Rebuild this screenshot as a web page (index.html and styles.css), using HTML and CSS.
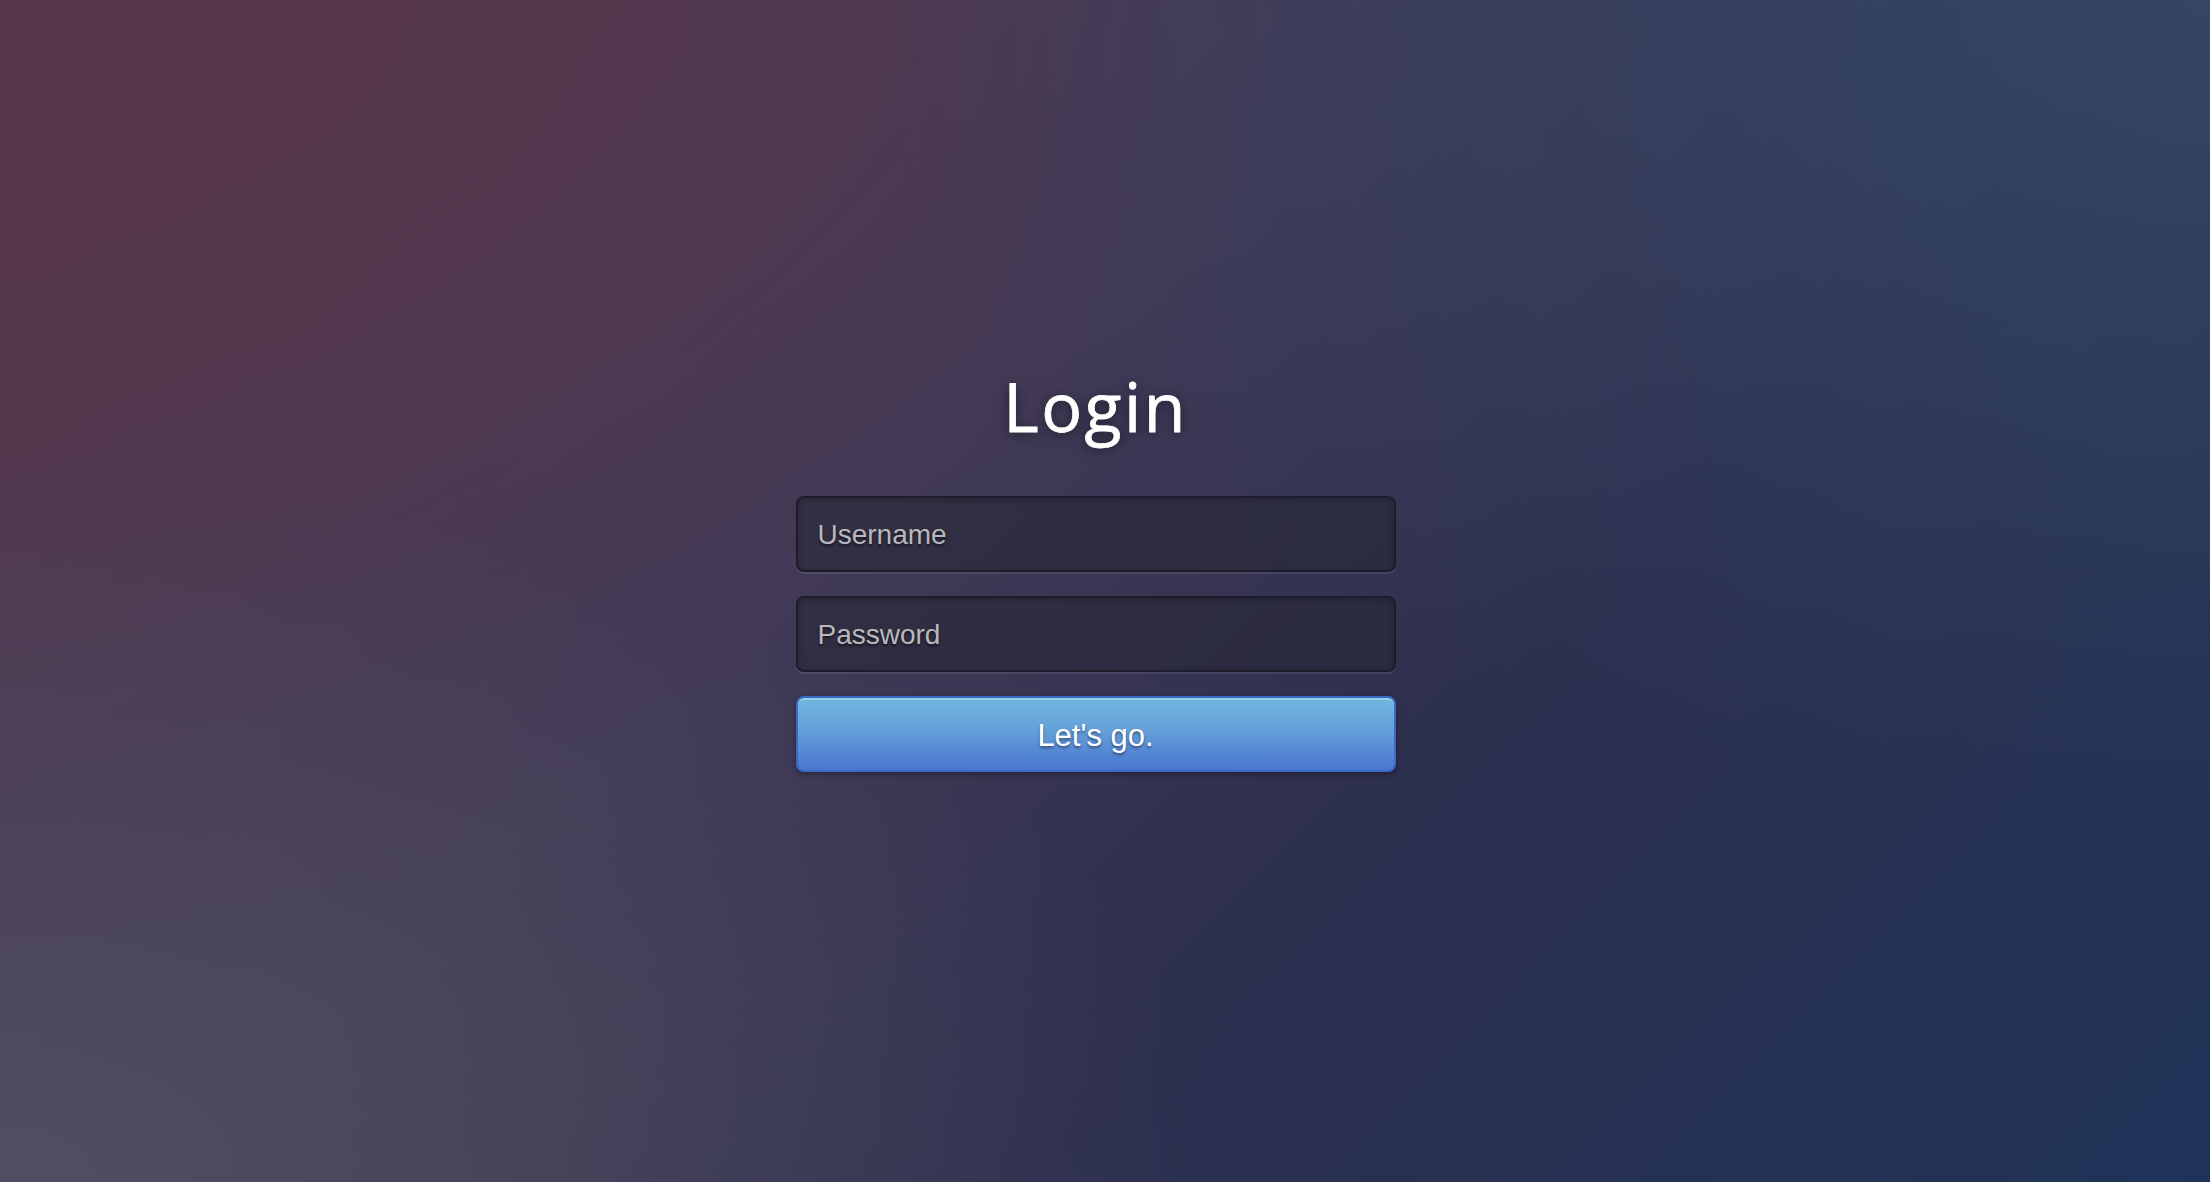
FILE: index.html
```html
<!DOCTYPE html>
<html lang="en">
<head>
<meta charset="utf-8">
<title>Login</title>
<link rel="stylesheet" href="styles.css">
</head>
<body>
<main class="page">
  <form class="login">
    <h1 class="title">Login</h1>
    <input class="field" type="text" placeholder="Username">
    <input class="field" type="password" placeholder="Password">
    <button class="btn" type="button">Let's go.</button>
  </form>
</main>
</body>
</html>
```
FILE: styles.css
```css
html, body {
  margin: 0;
  padding: 0;
  height: 100%;
}
body {
  background:
    radial-gradient(ellipse 55% 60% at 0% 100%, rgba(80, 78, 96, 1) 0%, rgba(80, 78, 96, 0) 100%),
    radial-gradient(ellipse 60% 70% at 100% 0%, rgba(52, 70, 100, 1) 0%, rgba(52, 70, 100, 0) 100%),
    radial-gradient(ellipse 60% 60% at 0% 0%, rgba(89, 55, 75, 1) 0%, rgba(89, 55, 75, 0) 100%),
    linear-gradient(135deg, #56374c 0%, #423a56 40%, #2c2f4e 65%, #1f3358 100%);
  font-family: "Liberation Sans", Arial, sans-serif;
  overflow: hidden;
}
.page {
  height: 100%;
  display: flex;
  justify-content: center;
  align-items: flex-start;
  padding-top: 365px;
  padding-right: 19px;
  box-sizing: border-box;
}
.login {
  width: 600px;
  display: flex;
  flex-direction: column;
  gap: 24px;
}
.title {
  margin: 0 0 25px;
  font-family: "Open Sans", sans-serif;
  font-weight: 400;
  font-size: 68px;
  line-height: 82px;
  letter-spacing: 2.5px;
  color: #ffffff;
  text-align: center;
  -webkit-text-stroke: 0.8px #ffffff;
  text-shadow: 0 2px 12px rgba(0, 0, 0, 0.55);
}
.field {
  box-sizing: border-box;
  width: 600px;
  height: 76px;
  margin: 0;
  padding: 2px 20px 0;
  border: 2px solid #1d1c2a;
  border-radius: 8px;
  background: rgba(36, 35, 50, 0.5);
  box-shadow: 0 2px 0 rgba(255, 255, 255, 0.09), inset 0 2px 6px rgba(0, 0, 0, 0.2);
  font-family: "Liberation Sans", Arial, sans-serif;
  font-size: 28px;
  color: #dddddd;
  outline: none;
}
.field::placeholder {
  color: #b8b8bc;
  text-shadow: 0 2px 3px rgba(0, 0, 0, 0.6);
}
.btn {
  box-sizing: border-box;
  width: 600px;
  height: 76px;
  margin: 0;
  padding: 3px 0 0;
  border: 2px solid #3b69c4;
  border-radius: 8px;
  background: linear-gradient(to bottom, #70b6df 0%, #66a3da 40%, #4a76d0 100%);
  box-shadow: inset 0 2px 0 rgba(170, 220, 240, 0.6), 0 2px 6px rgba(0, 0, 0, 0.35);
  font-family: "Liberation Sans", Arial, sans-serif;
  font-size: 31px;
  color: #ffffff;
  text-shadow: 0 2px 3px rgba(0, 0, 0, 0.45);
  cursor: pointer;
}
```
